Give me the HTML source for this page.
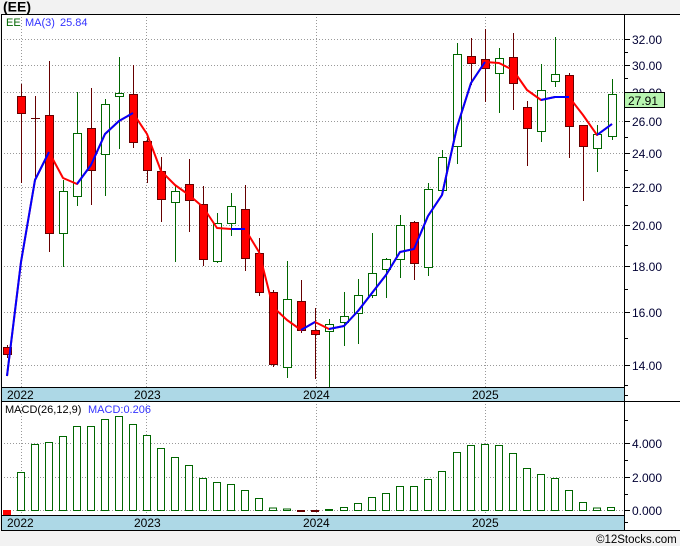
<!DOCTYPE html>
<html><head><meta charset="utf-8"><style>
body{margin:0;background:#f2f2f2;}
svg{display:block;font-family:"Liberation Sans",sans-serif;}
</style></head><body>
<svg width="680" height="546" viewBox="0 0 680 546" xmlns="http://www.w3.org/2000/svg">
<rect width="680" height="546" fill="#f2f2f2"/>
<text x="3" y="11.5" font-size="14" font-weight="bold" fill="#000">(EE)</text>
<rect x="1" y="14" width="679" height="516" fill="#fff"/>
<g stroke="#999" stroke-dasharray="1,2" stroke-width="1">
<line x1="1" x2="624" y1="39.5" y2="39.5"/><line x1="1" x2="624" y1="65.5" y2="65.5"/><line x1="1" x2="624" y1="92.5" y2="92.5"/><line x1="1" x2="624" y1="121.5" y2="121.5"/><line x1="1" x2="624" y1="153.5" y2="153.5"/><line x1="1" x2="624" y1="187.5" y2="187.5"/><line x1="1" x2="624" y1="225.5" y2="225.5"/><line x1="1" x2="624" y1="266.5" y2="266.5"/><line x1="1" x2="624" y1="312.5" y2="312.5"/><line x1="1" x2="624" y1="365.5" y2="365.5"/>
<line x1="21.5" x2="21.5" y1="14" y2="387"/><line x1="146.5" x2="146.5" y1="14" y2="387"/><line x1="316.5" x2="316.5" y1="14" y2="387"/><line x1="485.5" x2="485.5" y1="14" y2="387"/>
<line x1="1" x2="624" y1="443.5" y2="443.5"/><line x1="1" x2="624" y1="477.5" y2="477.5"/><line x1="1" x2="624" y1="510.5" y2="510.5"/>
<line x1="21.5" x2="21.5" y1="401" y2="515"/><line x1="146.5" x2="146.5" y1="401" y2="515"/><line x1="316.5" x2="316.5" y1="401" y2="515"/><line x1="485.5" x2="485.5" y1="401" y2="515"/>
</g>
<g stroke-width="1">
<g stroke="#660000">
<line x1="7.5" x2="7.5" y1="345" y2="358"/><line x1="21.5" x2="21.5" y1="84" y2="183"/><line x1="35.5" x2="35.5" y1="96" y2="177"/><line x1="31" x2="40" y1="118.5" y2="118.5"/><line x1="49.5" x2="49.5" y1="61" y2="252"/><line x1="91.5" x2="91.5" y1="88" y2="205"/><line x1="133.5" x2="133.5" y1="65" y2="148"/><line x1="147.5" x2="147.5" y1="137" y2="183"/><line x1="161.5" x2="161.5" y1="157" y2="222"/><line x1="189.5" x2="189.5" y1="159" y2="232"/><line x1="203.5" x2="203.5" y1="186" y2="266"/><line x1="245.5" x2="245.5" y1="185" y2="271"/><line x1="259.5" x2="259.5" y1="238" y2="296"/><line x1="273.5" x2="273.5" y1="290" y2="367"/><line x1="301.5" x2="301.5" y1="280" y2="333"/><line x1="315.5" x2="315.5" y1="308" y2="379"/><line x1="414.5" x2="414.5" y1="221" y2="280"/><line x1="471.5" x2="471.5" y1="38" y2="85"/><line x1="485.5" x2="485.5" y1="29" y2="102"/><line x1="513.5" x2="513.5" y1="33" y2="110"/><line x1="527.5" x2="527.5" y1="101" y2="166"/><line x1="569.5" x2="569.5" y1="73" y2="158"/><line x1="583.5" x2="583.5" y1="125" y2="201"/>
</g>
<g stroke="#006600">
<line x1="63.5" x2="63.5" y1="180" y2="267"/><line x1="77.5" x2="77.5" y1="92" y2="206"/><line x1="105.5" x2="105.5" y1="99" y2="196"/><line x1="119.5" x2="119.5" y1="57" y2="149"/><line x1="175.5" x2="175.5" y1="185" y2="262"/><line x1="217.5" x2="217.5" y1="213" y2="263"/><line x1="231.5" x2="231.5" y1="193" y2="236"/><line x1="287.5" x2="287.5" y1="261" y2="378"/><line x1="329.5" x2="329.5" y1="319" y2="387"/><line x1="344.5" x2="344.5" y1="292" y2="346"/><line x1="358.5" x2="358.5" y1="279" y2="344"/><line x1="372.5" x2="372.5" y1="233" y2="298"/><line x1="386.5" x2="386.5" y1="258" y2="298"/><line x1="400.5" x2="400.5" y1="215" y2="278"/><line x1="428.5" x2="428.5" y1="183" y2="276"/><line x1="442.5" x2="442.5" y1="150" y2="195"/><line x1="457.5" x2="457.5" y1="43" y2="164"/><line x1="499.5" x2="499.5" y1="48" y2="113"/><line x1="541.5" x2="541.5" y1="64" y2="142"/><line x1="555.5" x2="555.5" y1="37" y2="87"/><line x1="597.5" x2="597.5" y1="125" y2="172"/><line x1="612.5" x2="612.5" y1="79" y2="140"/>
</g>
</g>
<g fill="#ff0000" stroke="#660000" stroke-width="1">
<rect x="3.5" y="347.5" width="8" height="7"/><rect x="17.5" y="96.5" width="8" height="17"/><rect x="45.5" y="115.5" width="8" height="118"/><rect x="87.5" y="128.5" width="8" height="42"/><rect x="129.5" y="94.5" width="8" height="48"/><rect x="143.5" y="141.5" width="8" height="29"/><rect x="157.5" y="171.5" width="8" height="28"/><rect x="185.5" y="184.5" width="8" height="16"/><rect x="199.5" y="204.5" width="8" height="55"/><rect x="241.5" y="209.5" width="8" height="49"/><rect x="255.5" y="253.5" width="8" height="39"/><rect x="269.5" y="292.5" width="8" height="72"/><rect x="297.5" y="301.5" width="8" height="29"/><rect x="311.5" y="330.5" width="8" height="4"/><rect x="410.5" y="222.5" width="8" height="41"/><rect x="467.5" y="56.5" width="8" height="7"/><rect x="481.5" y="59.5" width="8" height="9"/><rect x="509.5" y="57.5" width="8" height="26"/><rect x="523.5" y="107.5" width="8" height="21"/><rect x="565.5" y="75.5" width="8" height="51"/><rect x="579.5" y="125.5" width="8" height="21"/>
</g>
<g fill="#fff" stroke="#006600" stroke-width="1">
<rect x="59.5" y="191.5" width="8" height="42"/><rect x="73.5" y="133.5" width="8" height="63"/><rect x="101.5" y="104.5" width="8" height="50"/><rect x="115.5" y="93.5" width="8" height="3"/><rect x="171.5" y="191.5" width="8" height="11"/><rect x="213.5" y="223.5" width="8" height="38"/><rect x="227.5" y="206.5" width="8" height="17"/><rect x="283.5" y="299.5" width="8" height="68"/><rect x="325.5" y="324.5" width="8" height="7"/><rect x="340.5" y="316.5" width="8" height="6"/><rect x="354.5" y="295.5" width="8" height="18"/><rect x="368.5" y="273.5" width="8" height="22"/><rect x="382.5" y="259.5" width="8" height="10"/><rect x="396.5" y="225.5" width="8" height="34"/><rect x="424.5" y="189.5" width="8" height="78"/><rect x="438.5" y="157.5" width="8" height="33"/><rect x="453.5" y="54.5" width="8" height="92"/><rect x="495.5" y="58.5" width="8" height="15"/><rect x="537.5" y="90.5" width="8" height="41"/><rect x="551.5" y="74.5" width="8" height="7"/><rect x="593.5" y="134.5" width="8" height="14"/><rect x="608.5" y="94.5" width="8" height="42"/>
</g>
<g fill="none" stroke-width="2" stroke-linejoin="round">
<polyline stroke="#ff0000" points="7,376 21,262 35,180 49,152 63,178 77,184 91,165 105,134 119,121 133,113 147,134 161,171 175,185 189,195 203,207 217,228 231,229 245,229 259,252 273,307 287,320 301,330 315,322 329,329 344,326 358,311 372,293 386,275 400,252 414,249 428,216 442,195 457,127 471,83 485,62 499,63 513,70 527,90 541,100 555,97 569,97 583,115 597,135 612,124"/>
<g stroke="#0000ff">
<polyline points="7,376 21,262 35,180 49,152"/>
<polyline points="77,184 91,165 105,134 119,121 133,113"/>
<polyline points="231,229 245,229"/>
<polyline points="301,330 315,322"/>
<polyline points="329,329 344,326 358,311 372,293 386,275 400,252 414,249 428,216 442,195 457,127 471,83 485,62"/>
<polyline points="541,100 555,97 569,97"/>
<polyline points="597,135 612,124"/>
</g>
</g>
<text x="6" y="26" font-size="11" fill="#006600">EE</text>
<text x="25" y="26" font-size="11" fill="#3333ff">MA(3)</text>
<text x="60" y="26" font-size="11" fill="#3333ff">25.84</text>
<rect x="1" y="387" width="623" height="14" fill="#add8e6"/>
<line x1="1" x2="624" y1="387.5" y2="387.5" stroke="#000"/>
<g font-size="12" fill="#000">
<text x="7" y="399">2022</text><text x="134" y="399">2023</text><text x="303" y="399">2024</text><text x="472" y="399">2025</text>
</g>
<g fill="#fff" stroke="#006600" stroke-width="1">
<rect x="17.5" y="472.5" width="7" height="38"/><rect x="31.5" y="444.5" width="7" height="66"/><rect x="45.5" y="442.5" width="7" height="68"/><rect x="59.5" y="436.5" width="7" height="74"/><rect x="73.5" y="426.5" width="7" height="84"/><rect x="87.5" y="426.5" width="7" height="84"/><rect x="101.5" y="419.5" width="7" height="91"/><rect x="115.5" y="416.5" width="7" height="94"/><rect x="129.5" y="424.5" width="7" height="86"/><rect x="143.5" y="435.5" width="7" height="75"/><rect x="157.5" y="448.5" width="7" height="62"/><rect x="171.5" y="457.5" width="7" height="53"/><rect x="185.5" y="465.5" width="7" height="45"/><rect x="199.5" y="478.5" width="7" height="32"/><rect x="213.5" y="482.5" width="7" height="28"/><rect x="227.5" y="484.5" width="7" height="26"/><rect x="241.5" y="490.5" width="7" height="20"/><rect x="255.5" y="498.5" width="7" height="12"/><rect x="269.5" y="508" width="7" height="2.5"/><rect x="283.5" y="509" width="7" height="1.5"/><rect x="325.5" y="509.5" width="7" height="1"/><rect x="340.5" y="507.5" width="7" height="3"/><rect x="354.5" y="503.5" width="7" height="7"/><rect x="368.5" y="497.5" width="7" height="13"/><rect x="382.5" y="493.5" width="7" height="17"/><rect x="396.5" y="486.5" width="7" height="24"/><rect x="410.5" y="486.5" width="7" height="24"/><rect x="424.5" y="479.5" width="7" height="31"/><rect x="438.5" y="471.5" width="7" height="39"/><rect x="453.5" y="452.5" width="7" height="58"/><rect x="467.5" y="445.5" width="7" height="65"/><rect x="481.5" y="444.5" width="7" height="66"/><rect x="495.5" y="445.5" width="7" height="65"/><rect x="509.5" y="453.5" width="7" height="57"/><rect x="523.5" y="468.5" width="7" height="42"/><rect x="537.5" y="474.5" width="7" height="36"/><rect x="551.5" y="478.5" width="7" height="32"/><rect x="565.5" y="490.5" width="7" height="20"/><rect x="579.5" y="502.5" width="7" height="8"/><rect x="593.5" y="508" width="7" height="2.5"/><rect x="607.5" y="507.5" width="7" height="3"/>
</g>
<rect x="297" y="510" width="8" height="2" fill="#660000"/><rect x="311" y="510" width="8" height="2" fill="#660000"/>
<rect x="3" y="510" width="8" height="5" fill="#ff0000"/>
<text x="5" y="413" font-size="11" fill="#000">MACD(26,12,9)</text>
<text x="88" y="413" font-size="11" fill="#3333ff">MACD:0.206</text>
<rect x="1" y="515" width="623" height="15" fill="#add8e6"/>
<line x1="1" x2="624" y1="515.5" y2="515.5" stroke="#000"/>
<g font-size="12" fill="#000">
<text x="7" y="527">2022</text><text x="134" y="527">2023</text><text x="303" y="527">2024</text><text x="472" y="527">2025</text>
</g>
<g stroke="#000" stroke-width="1">
<line x1="624.5" x2="624.5" y1="14" y2="530"/>
<line x1="624" x2="630" y1="39.5" y2="39.5"/><line x1="624" x2="628" y1="52.5" y2="52.5"/><line x1="624" x2="630" y1="65.5" y2="65.5"/><line x1="624" x2="628" y1="78.5" y2="78.5"/><line x1="624" x2="630" y1="92.5" y2="92.5"/><line x1="624" x2="628" y1="106.5" y2="106.5"/><line x1="624" x2="630" y1="121.5" y2="121.5"/><line x1="624" x2="628" y1="137.5" y2="137.5"/><line x1="624" x2="630" y1="153.5" y2="153.5"/><line x1="624" x2="628" y1="170.5" y2="170.5"/><line x1="624" x2="630" y1="187.5" y2="187.5"/><line x1="624" x2="628" y1="205.5" y2="205.5"/><line x1="624" x2="630" y1="225.5" y2="225.5"/><line x1="624" x2="628" y1="245.5" y2="245.5"/><line x1="624" x2="630" y1="266.5" y2="266.5"/><line x1="624" x2="628" y1="289.5" y2="289.5"/><line x1="624" x2="630" y1="312.5" y2="312.5"/><line x1="624" x2="628" y1="338.5" y2="338.5"/><line x1="624" x2="630" y1="365.5" y2="365.5"/><line x1="624" x2="628" y1="385.5" y2="385.5"/><line x1="624" x2="628" y1="395.5" y2="395.5"/>
<line x1="624" x2="628" y1="420.5" y2="420.5"/><line x1="624" x2="630" y1="443.5" y2="443.5"/><line x1="624" x2="628" y1="460.5" y2="460.5"/><line x1="624" x2="630" y1="477.5" y2="477.5"/><line x1="624" x2="628" y1="494.5" y2="494.5"/><line x1="624" x2="630" y1="510.5" y2="510.5"/><line x1="624" x2="628" y1="522.5" y2="522.5"/>
<line x1="1" x2="680" y1="14.5" y2="14.5"/>
<line x1="1" x2="680" y1="401.5" y2="401.5"/>
<line x1="1" x2="680" y1="530.5" y2="530.5"/>
<line x1="1.5" x2="1.5" y1="14" y2="530"/>
</g>
<g font-size="12" fill="#000033">
<text x="632" y="44">32.00</text><text x="632" y="70">30.00</text><text x="632" y="97">28.00</text><text x="632" y="126">26.00</text><text x="632" y="158">24.00</text><text x="632" y="192">22.00</text><text x="632" y="230">20.00</text><text x="632" y="271">18.00</text><text x="632" y="317">16.00</text><text x="632" y="370">14.00</text>
<text x="632" y="448">4.000</text><text x="632" y="482">2.000</text><text x="632" y="515">0.000</text>
</g>
<rect x="624.5" y="92.5" width="40" height="15" fill="#b8f5b0" stroke="#000"/>
<text x="628" y="105" font-size="12" fill="#000">27.91</text>
<text x="596" y="543" font-size="11.5" fill="#000">©12Stocks.com</text>
</svg>
</body></html>
